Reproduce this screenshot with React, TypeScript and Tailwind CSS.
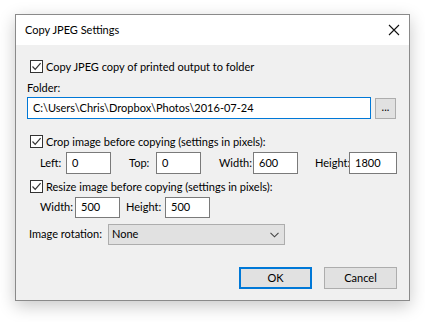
import { ReactNode } from "react";

const FONT = "font-['Lato',_'Noto_Sans',_sans-serif]";

function CheckBox({ label }: { label: string }) {
  return (
    <div className="flex items-center h-[20px]">
      <span className="w-[13px] h-[13px] border border-[#333333] bg-white flex items-center justify-center shrink-0">
        <svg width="11" height="11" viewBox="0 0 11 11">
          <path d="M1.5 5.5 L4.2 8.3 L9.6 2.2" fill="none" stroke="#333333" strokeWidth="1.2" />
        </svg>
      </span>
      <span className="ml-[3px] leading-none whitespace-nowrap">{label}</span>
    </div>
  );
}

function TextBox({ value, w, h = 22 }: { value: string; w: number; h?: number }) {
  return (
    <div
      className="border border-[#7a7a7a] bg-white flex items-center pl-[5px] shrink-0"
      style={{ width: w, height: h }}
    >
      {value}
    </div>
  );
}

function Field({ label, lw, children }: { label: string; lw: number; children: ReactNode }) {
  return (
    <div className="flex items-center">
      <span className="shrink-0 whitespace-nowrap" style={{ width: lw }}>
        {label}
      </span>
      {children}
    </div>
  );
}

export default function App() {
  return (
    <div className={`w-[425px] h-[322px] bg-white pt-[14px] pl-[15px] text-[11px] text-black ${FONT}`}>
      <div className="w-[395px] h-[287px] border border-[#8a8a8a] bg-[#f0f0f0] flex flex-col shadow-[0_5px_16px_rgba(0,0,0,0.22)]">
        {/* Title bar */}
        <div className="h-[30px] bg-white flex items-center justify-between pl-[9px] pr-[9px] shrink-0">
          <span className="text-[11px]">Copy JPEG Settings</span>
          <svg width="12" height="12" viewBox="0 0 12 12">
            <path d="M1 1 L11 11 M11 1 L1 11" stroke="#111" strokeWidth="1.1" />
          </svg>
        </div>

        {/* Body */}
        <div className="flex flex-col pl-[14px] pr-[12px]">
          <div className="mt-[11px]">
            <CheckBox label="Copy JPEG copy of printed output to folder" />
          </div>
          <div className="mt-[4px] h-[16px] flex items-center ml-[-3px]">Folder:</div>
          <div className="mt-[1px] flex items-center ml-[-3px]">
            <div className="w-[344px] h-[22px] border border-[#0078d7] bg-white flex items-center pl-[5px] whitespace-nowrap">
              C:\Users\Chris\Dropbox\Photos\2016-07-24
            </div>
            <div className="ml-[4px] w-[21px] h-[21px] border border-[#adadad] bg-[#e1e1e1] flex items-center justify-center leading-none pb-[3px]">
              ...
            </div>
          </div>

          <div className="mt-[12px]">
            <CheckBox label="Crop image before copying (settings in pixels):" />
          </div>
          <div className="mt-[1px] flex items-center pl-[10px]">
            <Field label="Left:" lw={26}>
              <TextBox value="0" w={45} />
            </Field>
            <div className="ml-[18px]">
              <Field label="Top:" lw={27}>
                <TextBox value="0" w={45} />
              </Field>
            </div>
            <div className="ml-[18px]">
              <Field label="Width:" lw={34}>
                <TextBox value="600" w={45} />
              </Field>
            </div>
            <div className="ml-[17px]">
              <Field label="Height:" lw={34}>
                <TextBox value="1800" w={48} />
              </Field>
            </div>
          </div>

          <div className="mt-[2px]">
            <CheckBox label="Resize image before copying (settings in pixels):" />
          </div>
          <div className="mt-[1px] flex items-center pl-[10px]">
            <Field label="Width:" lw={35}>
              <TextBox value="500" w={45} h={21} />
            </Field>
            <div className="ml-[6px]">
              <Field label="Height:" lw={39}>
                <TextBox value="500" w={45} h={21} />
              </Field>
            </div>
          </div>

          <div className="mt-[6px] flex items-center ml-[-1px]">
            <span className="w-[79px] shrink-0 whitespace-nowrap">Image rotation:</span>
            <div className="w-[177px] h-[21px] border border-[#adadad] bg-[#e1e1e1] flex items-center justify-between pl-[3px] pr-[5px]">
              <span>None</span>
              <svg width="9" height="6" viewBox="0 0 9 6">
                <path d="M0.5 0.8 L4.5 4.8 L8.5 0.8" fill="none" stroke="#444" strokeWidth="1.1" />
              </svg>
            </div>
          </div>

          <div className="mt-[22px] flex justify-end gap-[12px]">
            <div className="w-[73px] h-[22px] border-2 border-[#0078d7] bg-[#e1e1e1] flex items-center justify-center">
              OK
            </div>
            <div className="w-[73px] h-[22px] border border-[#adadad] bg-[#e1e1e1] flex items-center justify-center">
              Cancel
            </div>
          </div>
        </div>
      </div>
    </div>
  );
}
